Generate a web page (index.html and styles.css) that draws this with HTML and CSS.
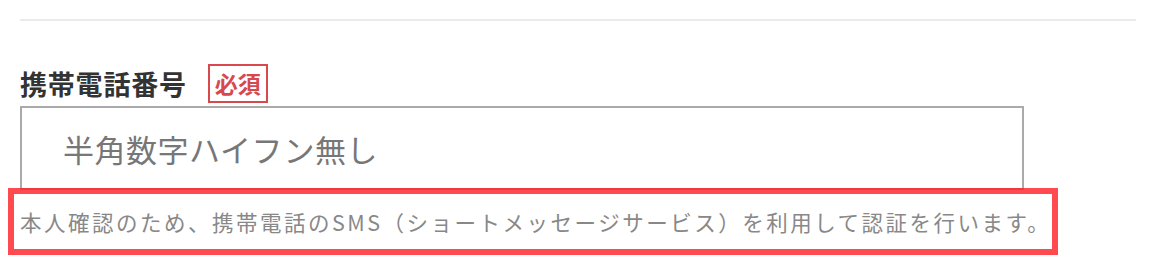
FILE: index.html
```html
<!DOCTYPE html>
<html lang="ja">
<head>
<meta charset="utf-8">
<link rel="stylesheet" href="styles.css">
</head>
<body>
<div class="page">
  <hr class="divider">
  <div class="field">
    <div class="label-row">
      <span class="label">携帯電話番号</span>
      <span class="badge">必須</span>
    </div>
    <input class="input" type="text" placeholder="半角数字ハイフン無し">
    <p class="help">本人確認のため、携帯電話のSMS（ショートメッセージサービス）を利用して認証を行います。</p>
  </div>
</div>
</body>
</html>
```
FILE: styles.css
```css
html, body {
  margin: 0;
  padding: 0;
  background: #fff;
}
body {
  font-family: "Noto Sans CJK JP", "Noto Sans", sans-serif;
  color: #333;
}
.page {
  padding: 19px 20px 0 20px;
}
.divider {
  margin: 0;
  border: 0;
  height: 2px;
  background: #ebebeb;
}
.field {
  margin-top: 43px;
}
.label-row {
  display: flex;
  align-items: center;
  height: 39px;
}
.label {
  font-size: 27px;
  font-weight: 700;
  letter-spacing: 0.8px;
  line-height: 1;
  color: #333;
}
.badge {
  margin-left: 21px;
  box-sizing: border-box;
  width: 60px;
  height: 39px;
  border: 2px solid #d9484d;
  color: #d64a4f;
  font-size: 23px;
  font-weight: 700;
  line-height: 34px;
  text-align: center;
}
.input {
  display: block;
  box-sizing: border-box;
  margin-top: 3px;
  width: 1004px;
  height: 84px;
  border: 2px solid #aaa;
  border-radius: 0;
  padding: 0 0 0 41px;
  font-family: "Noto Sans CJK JP", "Noto Sans", sans-serif;
  font-size: 31px;
  letter-spacing: 0.5px;
  color: #333;
  outline: none;
  background: #fff;
}
.input::placeholder {
  color: #777;
  opacity: 1;
}
.help {
  position: relative;
  box-sizing: border-box;
  display: flex;
  align-items: center;
  margin: -2px 0 0 -12px;
  width: 1050px;
  height: 67px;
  border: 6px solid rgba(255, 30, 35, 0.8);
  padding: 0 0 1px 6px;
  font-size: 21.5px;
  letter-spacing: 2.5px;
  color: #888;
  white-space: nowrap;
}
```
